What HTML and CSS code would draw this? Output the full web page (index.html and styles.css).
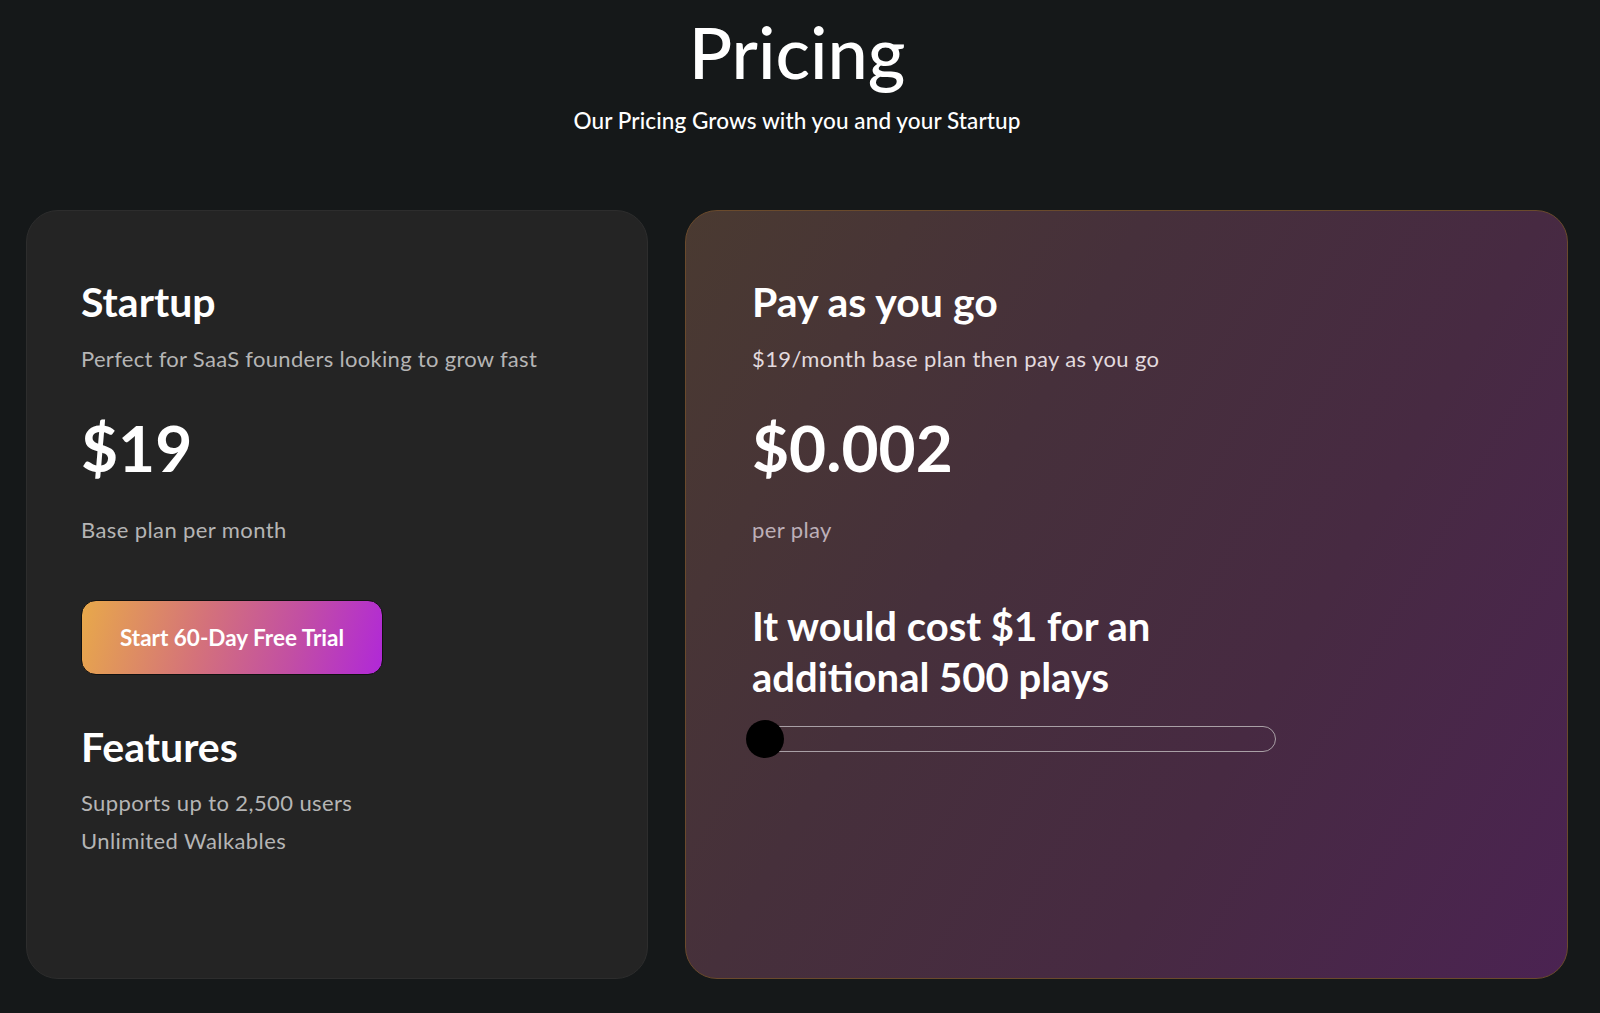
FILE: index.html
```html
<!DOCTYPE html>
<html lang="en">
<head>
<meta charset="utf-8">
<title>Pricing</title>
<link rel="stylesheet" href="styles.css">
</head>
<body>
<main class="page">
  <header class="intro">
    <h1 class="title">Pricing</h1>
    <p class="subtitle">Our Pricing Grows with you and your Startup</p>
  </header>
  <section class="plans">
    <article class="card card-startup">
      <h2 class="plan-name">Startup</h2>
      <p class="plan-desc">Perfect for SaaS founders looking to grow fast</p>
      <p class="price">$19</p>
      <p class="price-note">Base plan per month</p>
      <button class="cta" type="button">Start 60-Day Free Trial</button>
      <h2 class="features-title">Features</h2>
      <ul class="features">
        <li>Supports up to 2,500 users</li>
        <li>Unlimited Walkables</li>
      </ul>
    </article>
    <article class="card card-payg">
      <h2 class="plan-name">Pay as you go</h2>
      <p class="plan-desc light">$19/month base plan then pay as you go</p>
      <p class="price">$0.002</p>
      <p class="price-note">per play</p>
      <h3 class="estimate">It would cost $1 for an additional 500 plays</h3>
      <div class="slider">
        <div class="slider-track"></div>
        <div class="slider-thumb"></div>
      </div>
    </article>
  </section>
</main>
</body>
</html>
```

FILE: styles.css
```css
* { box-sizing: border-box; }

html, body {
  margin: 0;
  padding: 0;
}

body {
  background: #151819;
  color: #ffffff;
  font-family: Lato, "Open Sans", "Liberation Sans", sans-serif;
}

.page {
  padding: 0 32px 0 26px;
}

.intro {
  text-align: center;
  padding-top: 8px;
}

.title {
  margin: 0;
  font-size: 72px;
  font-weight: 500;
  line-height: 1.2;
}

.subtitle {
  margin: 13px 0 0;
  font-size: 22.5px;
  font-weight: 500;
  letter-spacing: 0.1px;
  line-height: 1.2;
}

.plans {
  display: grid;
  grid-template-columns: 622px 883px;
  column-gap: 37px;
  margin-top: 76px;
}

.card {
  height: 769px;
  border-radius: 32px;
  padding-top: 66px;
}

.card-startup {
  background: #242424;
  border: 1px solid #2d2d2d;
  padding-left: 54px;
}

.card-payg {
  background: linear-gradient(120deg, #4a3a31 0%, #46303b 35%, #472a42 65%, #4b2352 100%);
  border: 1px solid #6a4a2c;
  padding-left: 66px;
}

.plan-name,
.features-title,
.estimate {
  margin: 0;
  font-size: 41px;
  font-weight: 700;
  line-height: 1.2;
}

.plan-desc {
  margin: 19px 0 0;
  font-size: 22px;
  letter-spacing: 0.3px;
  line-height: 1.2;
  color: #b5b5b5;
}

.plan-desc.light {
  color: #e2dade;
  letter-spacing: 0.4px;
}

.price {
  margin: 38px 0 0;
  font-size: 64px;
  font-weight: 700;
  line-height: 1.2;
}

.price-note {
  margin: 30px 0 0;
  font-size: 22px;
  letter-spacing: 0.4px;
  line-height: 1.2;
  color: #b5b5b5;
}

.card-payg .price-note {
  color: #bdb0b8;
}

.cta {
  display: flex;
  align-items: center;
  justify-content: center;
  margin-top: 57px;
  width: 302px;
  height: 75px;
  border: 1px solid #111;
  border-radius: 15px;
  background: linear-gradient(105deg, #e8a94a 0%, #d4727a 40%, #c24fa3 70%, #b028d8 100%);
  color: #ffffff;
  font-family: inherit;
  font-size: 22.5px;
  font-weight: 700;
  padding: 0;
}

.features-title {
  margin-top: 47px;
}

.features {
  list-style: none;
  margin: 13px 0 0;
  padding: 0;
  font-size: 22px;
  letter-spacing: 0.4px;
  color: #b5b5b5;
}

.features li {
  line-height: 38px;
}

.estimate {
  margin-top: 58px;
  max-width: 440px;
  font-size: 40px;
  line-height: 51px;
}

.slider {
  position: relative;
  margin-top: 23px;
  width: 524px;
  height: 26px;
}

.slider-track {
  height: 26px;
  border: 1px solid #a9a0a6;
  border-radius: 13px;
}

.slider-thumb {
  position: absolute;
  left: -6px;
  top: -6px;
  width: 38px;
  height: 38px;
  border-radius: 50%;
  background: #000000;
}
```
